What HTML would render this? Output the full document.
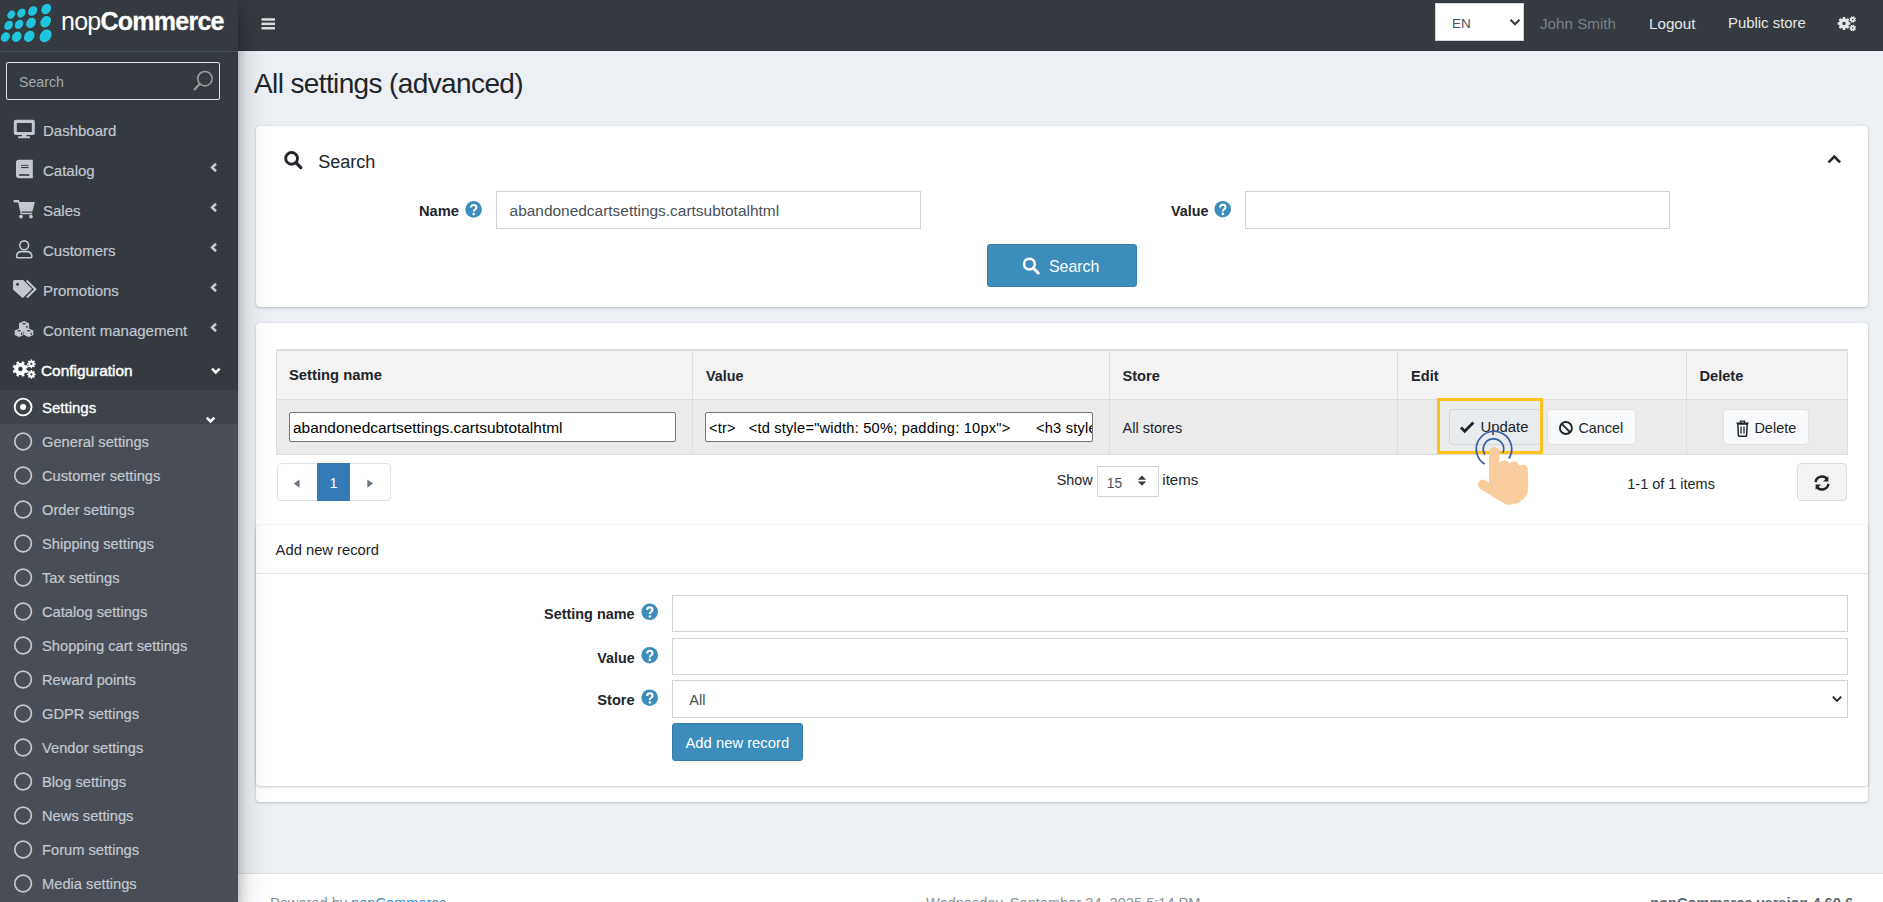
<!DOCTYPE html>
<html><head><meta charset="utf-8"><style>
*{box-sizing:border-box;margin:0;padding:0}
html,body{width:1883px;height:902px;overflow:hidden}
body{font-family:"Liberation Sans",sans-serif;background:#ecf0f5;color:#212529;position:relative}
.a{position:absolute;white-space:nowrap;line-height:1}
.box{position:absolute}
#hdr{position:absolute;left:0;top:0;width:1883px;height:51px;background:#343a40;border-bottom:1px solid #30353b}
#side{position:absolute;z-index:10;left:0;top:0;width:238px;height:902px;background:#343a40;box-shadow:0 14px 28px rgba(0,0,0,.25),0 10px 10px rgba(0,0,0,.22);overflow:hidden}
.card{position:absolute;background:#fff;border-radius:4px;box-shadow:0 0 1px rgba(0,0,0,.125),0 1px 3px rgba(0,0,0,.2)}
</style></head><body>
<div id="hdr"></div>
<svg class="a" style="left:0;top:0" width="300" height="50"><g fill="#dcdcdc"><rect x="261.5" y="18.2" width="13.5" height="2.5"/><rect x="261.5" y="22.6" width="13.5" height="2.5"/><rect x="261.5" y="27.0" width="13.5" height="2.5"/></g></svg>
<div class="box" style="left:1435px;top:3px;width:89px;height:38px;background:#fff;border:1px solid #ced4da"></div>
<div class="a" style="left:1452px;top:16.57px;font-size:13.5px;color:#495057;font-weight:normal;">EN</div>

<svg class="a" style="left:1505px;top:14px" width="20" height="16"><path d="M5.5,5.8 L10,10.3 L14.5,5.8" fill="none" stroke="#343a40" stroke-width="2"/></svg>
<div class="a" style="left:1540px;top:15.73px;font-size:15.2px;color:#7b8087;font-weight:normal;">John Smith</div>

<div class="a" style="left:1649px;top:16.13px;font-size:15.2px;color:#e6e6e6;font-weight:normal;">Logout</div>

<div class="a" style="left:1728px;top:16.39px;font-size:14.9px;color:#e6e6e6;font-weight:normal;">Public store</div>

<svg class="a" style="left:0;top:0" width="1883" height="50"><path fill="#e6e6e6" fill-rule="evenodd" d="M1848.95,22.26 L1850.38,22.23 L1850.38,24.77 L1848.95,24.74 L1848.37,26.12 L1849.40,27.11 L1847.61,28.90 L1846.62,27.87 L1845.24,28.45 L1845.27,29.88 L1842.73,29.88 L1842.76,28.45 L1841.38,27.87 L1840.39,28.90 L1838.60,27.11 L1839.63,26.12 L1839.05,24.74 L1837.62,24.77 L1837.62,22.23 L1839.05,22.26 L1839.63,20.88 L1838.60,19.89 L1840.39,18.10 L1841.38,19.13 L1842.76,18.55 L1842.73,17.12 L1845.27,17.12 L1845.24,18.55 L1846.62,19.13 L1847.61,18.10 L1849.40,19.89 L1848.37,20.88 Z M1845.70,23.50 A1.7,1.7 0 1,0 1842.30,23.50 A1.7,1.7 0 1,0 1845.70,23.50 Z M1855.27,19.88 L1856.03,20.16 L1855.53,21.39 L1854.79,21.05 L1854.25,21.59 L1854.59,22.33 L1853.36,22.83 L1853.08,22.07 L1852.32,22.07 L1852.04,22.83 L1850.81,22.33 L1851.15,21.59 L1850.61,21.05 L1849.87,21.39 L1849.37,20.16 L1850.13,19.88 L1850.13,19.12 L1849.37,18.84 L1849.87,17.61 L1850.61,17.95 L1851.15,17.41 L1850.81,16.67 L1852.04,16.17 L1852.32,16.93 L1853.08,16.93 L1853.36,16.17 L1854.59,16.67 L1854.25,17.41 L1854.79,17.95 L1855.53,17.61 L1856.03,18.84 L1855.27,19.12 Z M1853.50,19.50 A0.8,0.8 0 1,0 1851.90,19.50 A0.8,0.8 0 1,0 1853.50,19.50 Z M1855.27,28.38 L1856.03,28.66 L1855.53,29.89 L1854.79,29.55 L1854.25,30.09 L1854.59,30.83 L1853.36,31.33 L1853.08,30.57 L1852.32,30.57 L1852.04,31.33 L1850.81,30.83 L1851.15,30.09 L1850.61,29.55 L1849.87,29.89 L1849.37,28.66 L1850.13,28.38 L1850.13,27.62 L1849.37,27.34 L1849.87,26.11 L1850.61,26.45 L1851.15,25.91 L1850.81,25.17 L1852.04,24.67 L1852.32,25.43 L1853.08,25.43 L1853.36,24.67 L1854.59,25.17 L1854.25,25.91 L1854.79,26.45 L1855.53,26.11 L1856.03,27.34 L1855.27,27.62 Z M1853.50,28.00 A0.8,0.8 0 1,0 1851.90,28.00 A0.8,0.8 0 1,0 1853.50,28.00 Z"/></svg>
<div id="side">
<div class="box" style="left:0;top:51px;width:238px;height:1px;background:#4b545c"></div>
<svg class="a" style="left:0;top:0" width="60" height="50"><g fill="#22c3dd"><ellipse cx="11.3" cy="14.7" rx="3.50" ry="4.48" transform="rotate(38 11.3 14.7)"/><ellipse cx="21.3" cy="13.1" rx="3.83" ry="4.90" transform="rotate(38 21.3 13.1)"/><ellipse cx="32.7" cy="11" rx="4.11" ry="5.25" transform="rotate(38 32.7 11)"/><ellipse cx="46.2" cy="9.1" rx="4.45" ry="5.69" transform="rotate(38 46.2 9.1)"/><ellipse cx="8.6" cy="25.3" rx="3.91" ry="5.00" transform="rotate(38 8.6 25.3)"/><ellipse cx="19.1" cy="24.4" rx="3.91" ry="5.00" transform="rotate(38 19.1 24.4)"/><ellipse cx="31" cy="22.9" rx="4.43" ry="5.67" transform="rotate(38 31 22.9)"/><ellipse cx="45.7" cy="21.7" rx="4.86" ry="6.22" transform="rotate(38 45.7 21.7)"/><ellipse cx="5.4" cy="37" rx="4.08" ry="5.23" transform="rotate(38 5.4 37)"/><ellipse cx="16.7" cy="36.8" rx="4.39" ry="5.61" transform="rotate(38 16.7 36.8)"/><ellipse cx="29.3" cy="36.3" rx="4.77" ry="6.11" transform="rotate(38 29.3 36.3)"/><ellipse cx="45.6" cy="35.8" rx="5.42" ry="6.93" transform="rotate(38 45.6 35.8)"/></g></svg>
<div class="a" style="left:61px;top:8.5px;font-size:25px;line-height:25px;color:#fff;letter-spacing:-0.75px">nop<b style="-webkit-text-stroke:0.3px #fff">Commerce</b></div>
<div class="box" style="left:6px;top:62px;width:214px;height:38px;border:1.5px solid #e3e3e3;border-radius:2px"></div>
<div class="a" style="left:19px;top:74.98px;font-size:14.2px;color:#a3a8ae;font-weight:normal;">Search</div>

<svg class="a" style="left:0;top:0" width="238" height="100"><circle cx="204.9" cy="78.7" r="7.2" fill="none" stroke="#9b9b9b" stroke-width="1.6"/><line x1="199.8" y1="83.8" x2="194.6" y2="89.4" stroke="#9b9b9b" stroke-width="2.2" stroke-linecap="round"/></svg>
<div class="a" style="left:43px;top:123.30px;font-size:15px;color:#c2c7d0;font-weight:normal;-webkit-text-stroke:0.2px #c2c7d0">Dashboard</div>

<div class="a" style="left:43px;top:163.30px;font-size:15px;color:#c2c7d0;font-weight:normal;-webkit-text-stroke:0.2px #c2c7d0">Catalog</div>

<div class="a" style="left:43px;top:203.30px;font-size:15px;color:#c2c7d0;font-weight:normal;-webkit-text-stroke:0.2px #c2c7d0">Sales</div>

<div class="a" style="left:43px;top:243.30px;font-size:15px;color:#c2c7d0;font-weight:normal;-webkit-text-stroke:0.2px #c2c7d0">Customers</div>

<div class="a" style="left:43px;top:283.30px;font-size:15px;color:#c2c7d0;font-weight:normal;-webkit-text-stroke:0.2px #c2c7d0">Promotions</div>

<div class="a" style="left:43px;top:323.30px;font-size:15px;color:#c2c7d0;font-weight:normal;-webkit-text-stroke:0.2px #c2c7d0">Content management</div>

<div class="box" style="left:0;top:390px;width:238px;height:34px;background:#3e434a"></div>
<div class="box" style="left:0;top:424px;width:238px;height:478px;background:#494e56"></div>
<div class="a" style="left:41px;top:362.96px;font-size:15.4px;color:#fff;font-weight:normal;-webkit-text-stroke:0.45px #fff">Configuration</div>

<div class="a" style="left:42px;top:400.30px;font-size:15px;color:#fff;font-weight:normal;-webkit-text-stroke:0.3px #fff">Settings</div>

<div class="a" style="left:42px;top:434.56px;font-size:14.7px;color:#c2c7d0;font-weight:normal;-webkit-text-stroke:0.2px #c2c7d0">General settings</div>

<div class="a" style="left:42px;top:468.56px;font-size:14.7px;color:#c2c7d0;font-weight:normal;-webkit-text-stroke:0.2px #c2c7d0">Customer settings</div>

<div class="a" style="left:42px;top:502.56px;font-size:14.7px;color:#c2c7d0;font-weight:normal;-webkit-text-stroke:0.2px #c2c7d0">Order settings</div>

<div class="a" style="left:42px;top:536.56px;font-size:14.7px;color:#c2c7d0;font-weight:normal;-webkit-text-stroke:0.2px #c2c7d0">Shipping settings</div>

<div class="a" style="left:42px;top:570.56px;font-size:14.7px;color:#c2c7d0;font-weight:normal;-webkit-text-stroke:0.2px #c2c7d0">Tax settings</div>

<div class="a" style="left:42px;top:604.56px;font-size:14.7px;color:#c2c7d0;font-weight:normal;-webkit-text-stroke:0.2px #c2c7d0">Catalog settings</div>

<div class="a" style="left:42px;top:638.56px;font-size:14.7px;color:#c2c7d0;font-weight:normal;-webkit-text-stroke:0.2px #c2c7d0">Shopping cart settings</div>

<div class="a" style="left:42px;top:672.56px;font-size:14.7px;color:#c2c7d0;font-weight:normal;-webkit-text-stroke:0.2px #c2c7d0">Reward points</div>

<div class="a" style="left:42px;top:706.56px;font-size:14.7px;color:#c2c7d0;font-weight:normal;-webkit-text-stroke:0.2px #c2c7d0">GDPR settings</div>

<div class="a" style="left:42px;top:740.56px;font-size:14.7px;color:#c2c7d0;font-weight:normal;-webkit-text-stroke:0.2px #c2c7d0">Vendor settings</div>

<div class="a" style="left:42px;top:774.56px;font-size:14.7px;color:#c2c7d0;font-weight:normal;-webkit-text-stroke:0.2px #c2c7d0">Blog settings</div>

<div class="a" style="left:42px;top:808.56px;font-size:14.7px;color:#c2c7d0;font-weight:normal;-webkit-text-stroke:0.2px #c2c7d0">News settings</div>

<div class="a" style="left:42px;top:842.56px;font-size:14.7px;color:#c2c7d0;font-weight:normal;-webkit-text-stroke:0.2px #c2c7d0">Forum settings</div>

<div class="a" style="left:42px;top:876.56px;font-size:14.7px;color:#c2c7d0;font-weight:normal;-webkit-text-stroke:0.2px #c2c7d0">Media settings</div>

<svg class="a" style="left:0;top:0" width="238" height="902">
<path fill="#c2c7d0" fill-rule="evenodd" d="M15.8,119.8 H32.8 Q34.8,119.8 34.8,121.8 V133 Q34.8,135 32.8,135 H15.8 Q13.8,135 13.8,133 V121.8 Q13.8,119.8 15.8,119.8 Z M16.8,123 V132 H31.8 V123 Z"/>
<rect x="22" y="134.5" width="4.3" height="2.5" fill="#c2c7d0"/><rect x="18" y="136.3" width="12.1" height="2" rx="1" fill="#c2c7d0"/>
<path fill="#c2c7d0" d="M19,159.8 H32.8 V178.3 H19 Q16,178.3 16,175.3 V162.8 Q16,159.8 19,159.8 Z"/>
<rect x="21" y="164.9" width="7.5" height="0.9" fill="#343a40"/><rect x="21" y="167" width="7.5" height="1.1" fill="#343a40"/><rect x="19" y="174.2" width="10.3" height="1.6" rx="0.5" fill="#2a2f35"/>
<path fill="#c2c7d0" d="M13.5,200.8 Q13.5,200 14.3,200 H19 L19.6,202 H34.2 Q34.9,202.2 34.7,203 L32.4,211.5 H21.4 L21.8,212.8 H32.2 V214.2 H20.7 L18.2,202.6 H14.3 Q13.5,202.6 13.5,201.8 Z"/>
<circle cx="20.9" cy="216.6" r="1.9" fill="#c2c7d0"/><circle cx="30.9" cy="216.6" r="1.9" fill="#c2c7d0"/>
<circle cx="24.2" cy="245.3" r="4.4" fill="none" stroke="#c2c7d0" stroke-width="1.6"/>
<path d="M17.6,257.8 Q16.6,257.8 16.6,256.6 Q16.6,251.6 21.6,251.6 H26.8 Q31.8,251.6 31.8,256.6 Q31.8,257.8 30.8,257.8 Z" fill="none" stroke="#c2c7d0" stroke-width="1.6"/>
<path fill="#c2c7d0" fill-rule="evenodd" d="M14.6,280 H23.2 L31.6,288.6 Q32,289.1 31.6,289.6 L23.3,297.6 Q22.6,298.3 21.9,297.6 L13,289.6 V281.6 Q13,280 14.6,280 Z M17.5,282.7 A1.5,1.5 0 1,0 17.5,285.7 A1.5,1.5 0 1,0 17.5,282.7 Z"/>
<path d="M26.6,280.5 L35.3,289.2 L26.9,297.6" fill="none" stroke="#c2c7d0" stroke-width="2.1"/>
<g fill="#c2c7d0">
<path d="M24,320.9 L29.1,323.2 V329.6 L24,331.9 L19,329.6 V323.2 Z"/>
<path d="M19.1,328.6 L23.5,330.6 V335 L19.1,337 L14.7,335 V330.6 Z"/>
<path d="M28.7,328.6 L33.3,330.6 V335 L28.7,337 L24.1,335 V330.6 Z"/>
</g>
<g fill="#343a40"><ellipse cx="24" cy="323.8" rx="1.8" ry="0.8"/><ellipse cx="26.9" cy="327" rx="0.7" ry="1.2"/><ellipse cx="19.1" cy="330.8" rx="1.8" ry="0.7"/><ellipse cx="21.6" cy="333.8" rx="0.7" ry="1.2"/><ellipse cx="28.7" cy="330.8" rx="1.8" ry="0.7"/><ellipse cx="31.2" cy="333.8" rx="0.7" ry="1.2"/></g>
<path fill="#fff" fill-rule="evenodd" d="M26.51,370.06 L28.21,370.71 L27.14,373.31 L25.47,372.57 L23.97,374.07 L24.71,375.74 L22.11,376.81 L21.46,375.11 L19.34,375.11 L18.69,376.81 L16.09,375.74 L16.83,374.07 L15.33,372.57 L13.66,373.31 L12.59,370.71 L14.29,370.06 L14.29,367.94 L12.59,367.29 L13.66,364.69 L15.33,365.43 L16.83,363.93 L16.09,362.26 L18.69,361.19 L19.34,362.89 L21.46,362.89 L22.11,361.19 L24.71,362.26 L23.97,363.93 L25.47,365.43 L27.14,364.69 L28.21,367.29 L26.51,367.94 Z M22.70,369.00 A2.3,2.3 0 1,0 18.10,369.00 A2.3,2.3 0 1,0 22.70,369.00 Z M34.62,363.18 L35.73,363.13 L35.73,364.67 L34.62,364.62 L34.19,365.67 L35.01,366.42 L33.92,367.51 L33.17,366.69 L32.12,367.12 L32.17,368.23 L30.63,368.23 L30.68,367.12 L29.63,366.69 L28.88,367.51 L27.79,366.42 L28.61,365.67 L28.18,364.62 L27.07,364.67 L27.07,363.13 L28.18,363.18 L28.61,362.13 L27.79,361.38 L28.88,360.29 L29.63,361.11 L30.68,360.68 L30.63,359.57 L32.17,359.57 L32.12,360.68 L33.17,361.11 L33.92,360.29 L35.01,361.38 L34.19,362.13 Z M32.50,363.90 A1.1,1.1 0 1,0 30.30,363.90 A1.1,1.1 0 1,0 32.50,363.90 Z M34.62,373.68 L35.73,373.63 L35.73,375.17 L34.62,375.12 L34.19,376.17 L35.01,376.92 L33.92,378.01 L33.17,377.19 L32.12,377.62 L32.17,378.73 L30.63,378.73 L30.68,377.62 L29.63,377.19 L28.88,378.01 L27.79,376.92 L28.61,376.17 L28.18,375.12 L27.07,375.17 L27.07,373.63 L28.18,373.68 L28.61,372.63 L27.79,371.88 L28.88,370.79 L29.63,371.61 L30.68,371.18 L30.63,370.07 L32.17,370.07 L32.12,371.18 L33.17,371.61 L33.92,370.79 L35.01,371.88 L34.19,372.63 Z M32.50,374.40 A1.1,1.1 0 1,0 30.30,374.40 A1.1,1.1 0 1,0 32.50,374.40 Z"/>
<circle cx="23.1" cy="407" r="8.4" fill="none" stroke="#fff" stroke-width="1.9"/><circle cx="23.1" cy="407" r="3" fill="#fff"/>
<path d="M216,163.8 L212.1,167.5 L216,171.2" fill="none" stroke="#c2c7d0" stroke-width="2.6" stroke-linejoin="miter"/><path d="M216,203.8 L212.1,207.5 L216,211.2" fill="none" stroke="#c2c7d0" stroke-width="2.6" stroke-linejoin="miter"/><path d="M216,243.8 L212.1,247.5 L216,251.2" fill="none" stroke="#c2c7d0" stroke-width="2.6" stroke-linejoin="miter"/><path d="M216,283.8 L212.1,287.5 L216,291.2" fill="none" stroke="#c2c7d0" stroke-width="2.6" stroke-linejoin="miter"/><path d="M216,323.8 L212.1,327.5 L216,331.2" fill="none" stroke="#c2c7d0" stroke-width="2.6" stroke-linejoin="miter"/><path d="M212,368.6 L215.8,372.4 L219.6,368.6" fill="none" stroke="#fff" stroke-width="2.6"/><path d="M206.7,417.6 L210.5,421.4 L214.3,417.6" fill="none" stroke="#fff" stroke-width="2.6"/><circle cx="23.1" cy="441.5" r="8.3" fill="none" stroke="#c2c7d0" stroke-width="1.7"/><circle cx="23.1" cy="475.5" r="8.3" fill="none" stroke="#c2c7d0" stroke-width="1.7"/><circle cx="23.1" cy="509.5" r="8.3" fill="none" stroke="#c2c7d0" stroke-width="1.7"/><circle cx="23.1" cy="543.5" r="8.3" fill="none" stroke="#c2c7d0" stroke-width="1.7"/><circle cx="23.1" cy="577.5" r="8.3" fill="none" stroke="#c2c7d0" stroke-width="1.7"/><circle cx="23.1" cy="611.5" r="8.3" fill="none" stroke="#c2c7d0" stroke-width="1.7"/><circle cx="23.1" cy="645.5" r="8.3" fill="none" stroke="#c2c7d0" stroke-width="1.7"/><circle cx="23.1" cy="679.5" r="8.3" fill="none" stroke="#c2c7d0" stroke-width="1.7"/><circle cx="23.1" cy="713.5" r="8.3" fill="none" stroke="#c2c7d0" stroke-width="1.7"/><circle cx="23.1" cy="747.5" r="8.3" fill="none" stroke="#c2c7d0" stroke-width="1.7"/><circle cx="23.1" cy="781.5" r="8.3" fill="none" stroke="#c2c7d0" stroke-width="1.7"/><circle cx="23.1" cy="815.5" r="8.3" fill="none" stroke="#c2c7d0" stroke-width="1.7"/><circle cx="23.1" cy="849.5" r="8.3" fill="none" stroke="#c2c7d0" stroke-width="1.7"/><circle cx="23.1" cy="883.5" r="8.3" fill="none" stroke="#c2c7d0" stroke-width="1.7"/></svg>
</div>
<div class="a" style="left:254px;top:69.70px;font-size:28px;color:#212529;font-weight:normal;letter-spacing:-0.62px">All settings (advanced)</div>
<div class="box" style="left:256px;top:126px;width:1612px;height:181px;background:#fff;border-radius:4px;box-shadow:0 0 1px rgba(0,0,0,.125),0 1px 3px rgba(0,0,0,.2)"></div>
<svg class="a" style="left:282px;top:149px" width="24" height="24" viewBox="0 0 24 24"><circle cx="9.6" cy="9.4" r="5.9" fill="none" stroke="#212529" stroke-width="2.9"/><line x1="13.9" y1="13.7" x2="18.8" y2="18.6" stroke="#212529" stroke-width="3.2" stroke-linecap="round"/></svg>
<div class="a" style="left:318.2px;top:152.76px;font-size:18px;color:#212529;font-weight:normal;">Search</div>
<svg class="a" style="left:1824px;top:150px" width="20" height="18"><path d="M4.5,12.3 L10.3,6.5 L16.1,12.3" fill="none" stroke="#212529" stroke-width="2.6"/></svg>
<div class="a" style="left:419px;top:203.86px;font-size:14.7px;color:#212529;font-weight:bold;">Name</div>
<svg class="a" style="left:463px;top:199px" width="20" height="20"><g transform="translate(1.60 1.40)"><circle cx="9" cy="9" r="8.3" fill="#3c8dbc"/><path d="M6.4,7.2 Q6.4,4.6 9.1,4.6 Q11.8,4.6 11.8,7 Q11.8,8.4 10.3,9.2 Q9.1,9.8 9.1,11.2" fill="none" stroke="#fff" stroke-width="2.1"/><circle cx="9.1" cy="13.7" r="1.3" fill="#fff"/></g></svg>
<div class="box" style="left:496px;top:191px;width:425px;height:38px;background:#fff;border:1px solid #ced4da"></div>
<div class="a" style="left:509.6px;top:203.22px;font-size:15.45px;color:#495057;font-weight:normal;">abandonedcartsettings.cartsubtotalhtml</div>
<div class="a" style="left:1171px;top:204.20px;font-size:14.3px;color:#212529;font-weight:bold;">Value</div>
<svg class="a" style="left:1212px;top:199px" width="20" height="20"><g transform="translate(1.70 1.20)"><circle cx="9" cy="9" r="8.3" fill="#3c8dbc"/><path d="M6.4,7.2 Q6.4,4.6 9.1,4.6 Q11.8,4.6 11.8,7 Q11.8,8.4 10.3,9.2 Q9.1,9.8 9.1,11.2" fill="none" stroke="#fff" stroke-width="2.1"/><circle cx="9.1" cy="13.7" r="1.3" fill="#fff"/></g></svg>
<div class="box" style="left:1245px;top:191px;width:425px;height:37.5px;background:#fff;border:1px solid #ced4da"></div>
<div class="box" style="left:987px;top:244px;width:150px;height:43px;background:#3c8dbc;border:1px solid #367fa9;border-radius:3px"></div>
<svg class="a" style="left:1020px;top:255px" width="24" height="22" viewBox="0 0 24 22"><circle cx="9.4" cy="9.1" r="5.4" fill="none" stroke="#fff" stroke-width="2.6"/><line x1="13.2" y1="13" x2="18.2" y2="18" stroke="#fff" stroke-width="3" stroke-linecap="round"/></svg>
<div class="a" style="left:1049px;top:258.54px;font-size:15.9px;color:#fff;font-weight:normal;">Search</div>
<div class="box" style="left:256px;top:323px;width:1612px;height:479px;background:#fff;border-radius:4px;box-shadow:0 0 1px rgba(0,0,0,.125),0 1px 3px rgba(0,0,0,.2)"></div>
<div class="box" style="left:276px;top:349px;width:1572px;height:50px;background:#f3f3f3;border-top:2px solid #dcdcdc;border-left:1px solid #dedede;border-right:1px solid #dedede"></div>
<div class="box" style="left:276px;top:399px;width:1572px;height:56px;background:#ebebeb;border-top:1px solid #dedede;border-bottom:1px solid #dedede;border-left:1px solid #dedede;border-right:1px solid #dedede"></div>
<div class="box" style="left:692px;top:350px;width:1px;height:105px;background:#dedede"></div>
<div class="box" style="left:1109px;top:350px;width:1px;height:105px;background:#dedede"></div>
<div class="box" style="left:1397px;top:350px;width:1px;height:105px;background:#dedede"></div>
<div class="box" style="left:1686px;top:350px;width:1px;height:105px;background:#dedede"></div>
<div class="a" style="left:289px;top:368.47px;font-size:14.8px;color:#212529;font-weight:bold;">Setting name</div>
<div class="a" style="left:706px;top:368.90px;font-size:14.3px;color:#212529;font-weight:bold;">Value</div>
<div class="a" style="left:1122.5px;top:368.64px;font-size:14.6px;color:#212529;font-weight:bold;">Store</div>
<div class="a" style="left:1411px;top:368.64px;font-size:14.6px;color:#212529;font-weight:bold;">Edit</div>
<div class="a" style="left:1699.5px;top:368.64px;font-size:14.6px;color:#212529;font-weight:bold;">Delete</div>
<div class="box" style="left:289px;top:412px;width:387px;height:30px;background:#fff;border:1px solid #767676;border-radius:2px"></div>
<div class="a" style="left:293px;top:419.92px;font-size:15.45px;color:#000;font-weight:normal;">abandonedcartsettings.cartsubtotalhtml</div>
<div class="box" style="left:705px;top:412px;width:388px;height:30px;background:#fff;border:1px solid #767676;border-radius:2px;overflow:hidden"><div class="a" style="left:3px;top:8.2px;font-size:14.6px;letter-spacing:0.22px;color:#000;white-space:pre">&lt;tr&gt;   &lt;td style="width: 50%; padding: 10px"&gt;      &lt;h3 style="margin:0"&gt;</div></div>
<div class="a" style="left:1122.5px;top:420.73px;font-size:14.5px;color:#212529;font-weight:normal;">All stores</div>
<div class="box" style="left:1448.5px;top:409px;width:93.5px;height:35.5px;background:#e9ecef;border:1px solid #d3d7db;border-radius:4px"></div>
<svg class="a" style="left:1458px;top:419px" width="20" height="18"><path d="M3,8.6 L6.7,12.3 L15.4,3.6" fill="none" stroke="#212529" stroke-width="2.8"/></svg>
<div class="a" style="left:1480.5px;top:420.42px;font-size:14.86px;color:#212529;font-weight:normal;">Update</div>
<div class="box" style="left:1546.5px;top:409px;width:89.0px;height:35.5px;background:#f8f9fa;border:1px solid #dfe2e5;border-radius:4px"></div>
<svg class="a" style="left:1556px;top:418px" width="20" height="20"><circle cx="9.9" cy="10" r="6" fill="none" stroke="#212529" stroke-width="1.9"/><line x1="5.8" y1="5.9" x2="14" y2="14.1" stroke="#212529" stroke-width="1.9"/></svg>
<div class="a" style="left:1578.5px;top:420.84px;font-size:14.36px;color:#212529;font-weight:normal;">Cancel</div>
<div class="box" style="left:1723px;top:409px;width:86px;height:35.5px;background:#f8f9fa;border:1px solid #dfe2e5;border-radius:4px"></div>
<svg class="a" style="left:1734px;top:418px" width="18" height="20"><path d="M3.8,6 H13.2 L12.6,17.3 Q12.5,18.2 11.6,18.2 H5.4 Q4.5,18.2 4.4,17.3 Z" fill="none" stroke="#212529" stroke-width="1.5"/><line x1="2.5" y1="5.2" x2="14.5" y2="5.2" stroke="#212529" stroke-width="1.5"/><path d="M6.5,5 V3.2 H10.5 V5" fill="none" stroke="#212529" stroke-width="1.3"/><line x1="7" y1="8.5" x2="7" y2="15.5" stroke="#212529" stroke-width="1.3"/><line x1="10" y1="8.5" x2="10" y2="15.5" stroke="#212529" stroke-width="1.3"/></svg>
<div class="a" style="left:1754.4px;top:420.73px;font-size:14.5px;color:#212529;font-weight:normal;">Delete</div>
<div class="box" style="left:1437px;top:398px;width:106px;height:56px;border:3px solid #fbc31a"></div>
<div class="box" style="left:276.5px;top:463px;width:114.5px;height:38px;background:#fff;border:1px solid #dee2e6;border-radius:4px"></div>
<div class="box" style="left:317px;top:463px;width:33px;height:38px;background:#337ab7"></div>
<svg class="a" style="left:270px;top:464.4px" width="130" height="45"><path d="M23.8,19.6 L29.5,15.4 V23.8 Z" fill="#6c757d"/><path d="M97.3,15.4 L103,19.6 L97.3,23.8 Z" fill="#6c757d"/></svg>
<div class="a" style="left:329.5px;top:476.23px;font-size:14.5px;color:#fff;font-weight:normal;">1</div>
<div class="a" style="left:1056.7px;top:472.59px;font-size:14.43px;color:#212529;font-weight:normal;">Show</div>
<div class="box" style="left:1097.3px;top:466.3px;width:61.40000000000009px;height:30.399999999999977px;background:#fff;border:1px solid #ced4da"></div>
<div class="a" style="left:1106.8px;top:477.32px;font-size:13.8px;color:#495057;font-weight:normal;">15</div>
<svg class="a" style="left:1135px;top:472px" width="14" height="18"><path d="M2.8,7.8 L7,3.6 L11.2,7.8 Z M2.8,9.6 H11.2 L7,13.8 Z" fill="#343a40"/></svg>
<div class="a" style="left:1162.3px;top:472.02px;font-size:15.1px;color:#212529;font-weight:normal;">items</div>
<div class="a" style="left:1627.3px;top:476.66px;font-size:14.46px;color:#212529;font-weight:normal;">1-1 of 1 items</div>
<div class="box" style="left:1797px;top:463px;width:50px;height:38px;background:#f3f3f3;border:1px solid #dcdcdc;border-radius:4px"></div>
<svg class="a" style="left:1812px;top:473px" width="20" height="20"><path d="M3.6,9.2 A6.4,6.4 0 0 1 15.2,6.3" fill="none" stroke="#212529" stroke-width="2.4"/><path d="M16.4,3.2 V8.6 H11 Z" fill="#212529"/><path d="M16.4,10.8 A6.4,6.4 0 0 1 4.8,13.7" fill="none" stroke="#212529" stroke-width="2.4"/><path d="M3.6,16.8 V11.4 H9 Z" fill="#212529"/></svg>
<div class="box" style="left:256px;top:525px;width:1612px;height:261px;background:#fff;border-radius:4px;box-shadow:0 0 1px rgba(0,0,0,.125),0 1px 3px rgba(0,0,0,.2)"></div>
<div class="box" style="left:256px;top:573px;width:1612px;height:1px;background:#e5e5e5"></div>
<div class="a" style="left:275.6px;top:542.51px;font-size:14.76px;color:#212529;font-weight:normal;">Add new record</div>
<div class="a" style="right:1248.4px;top:607.19px;font-size:14.43px;font-weight:bold;color:#212529">Setting name</div>
<svg class="a" style="left:639px;top:601px" width="20" height="20"><g transform="translate(1.70 1.80)"><circle cx="9" cy="9" r="8.3" fill="#3c8dbc"/><path d="M6.4,7.2 Q6.4,4.6 9.1,4.6 Q11.8,4.6 11.8,7 Q11.8,8.4 10.3,9.2 Q9.1,9.8 9.1,11.2" fill="none" stroke="#fff" stroke-width="2.1"/><circle cx="9.1" cy="13.7" r="1.3" fill="#fff"/></g></svg>
<div class="box" style="left:672px;top:594.5px;width:1176px;height:37.0px;background:#fff;border:1px solid #ced4da"></div>
<div class="a" style="right:1248.4px;top:650.50px;font-size:14.3px;font-weight:bold;color:#212529">Value</div>
<svg class="a" style="left:639px;top:645px" width="20" height="20"><g transform="translate(1.70 1.20)"><circle cx="9" cy="9" r="8.3" fill="#3c8dbc"/><path d="M6.4,7.2 Q6.4,4.6 9.1,4.6 Q11.8,4.6 11.8,7 Q11.8,8.4 10.3,9.2 Q9.1,9.8 9.1,11.2" fill="none" stroke="#fff" stroke-width="2.1"/><circle cx="9.1" cy="13.7" r="1.3" fill="#fff"/></g></svg>
<div class="box" style="left:672px;top:637.5px;width:1176px;height:37.0px;background:#fff;border:1px solid #ced4da"></div>
<div class="a" style="right:1248.4px;top:693.24px;font-size:14.6px;font-weight:bold;color:#212529">Store</div>
<svg class="a" style="left:639px;top:687px" width="20" height="20"><g transform="translate(1.70 1.70)"><circle cx="9" cy="9" r="8.3" fill="#3c8dbc"/><path d="M6.4,7.2 Q6.4,4.6 9.1,4.6 Q11.8,4.6 11.8,7 Q11.8,8.4 10.3,9.2 Q9.1,9.8 9.1,11.2" fill="none" stroke="#fff" stroke-width="2.1"/><circle cx="9.1" cy="13.7" r="1.3" fill="#fff"/></g></svg>
<div class="box" style="left:672px;top:680px;width:1176px;height:37.5px;background:#fff;border:1px solid #ced4da"></div>
<div class="a" style="left:689.3px;top:693.24px;font-size:14.6px;color:#495057;font-weight:normal;">All</div>
<svg class="a" style="left:1828px;top:690px" width="18" height="18"><path d="M4.8,6.6 L9,10.8 L13.2,6.6" fill="none" stroke="#212529" stroke-width="1.9"/></svg>
<div class="box" style="left:672px;top:723.4px;width:131px;height:37.80000000000007px;background:#3c8dbc;border:1px solid #367fa9;border-radius:3px"></div>
<div class="a" style="left:685.5px;top:735.97px;font-size:14.8px;color:#fff;font-weight:normal;">Add new record</div>
<div class="box" style="left:238px;top:873px;width:1645px;height:29px;background:#fff;border-top:1px solid #dee2e6"></div>
<div class="a" style="left:270px;top:896.24px;font-size:14.6px;color:#869099;font-weight:normal;">Powered by <span style="color:#3c8dbc">nopCommerce</span></div>
<div class="a" style="left:926px;top:896.24px;font-size:14.6px;color:#869099;font-weight:normal;">Wednesday, September 24, 2025 5:14 PM</div>
<div class="a" style="right:30px;top:896.24px;font-size:14.6px;font-weight:bold;color:#5f666d">nopCommerce version 4.60.6</div>
<svg class="a" style="left:0;top:0;z-index:5" width="1883" height="902">
<path d="M1484.75,464.09 A17.7,17.7 0 1,1 1508.89,458.56" fill="none" stroke="#3a5ca8" stroke-width="1.7"/>
<path d="M1484.89,454.47 A10.2,10.2 0 1,1 1503.00,452.72" fill="none" stroke="#3a5ca8" stroke-width="1.7"/>
<path fill="#f9cd9e" d="M1489,452.3 A5.2,5.2 0 0 1 1499.4,452.3 L1499.4,463.5 Q1501,460.5 1504.8,460.6 Q1508.5,460.8 1509.8,463.5 Q1511.5,460.8 1514.5,461.2 Q1518,461.6 1518.9,465.6 Q1520.5,464.6 1523.2,464.8 Q1527.9,465.4 1528,470.5 L1528.3,487 Q1528,497 1519,502.5 Q1512,505.5 1506,504.5 L1481,489.5 Q1476.5,486.5 1478.2,482.5 Q1480.8,478.2 1485.5,480.2 L1489,482.5 Z"/>
</svg>

</body></html>
